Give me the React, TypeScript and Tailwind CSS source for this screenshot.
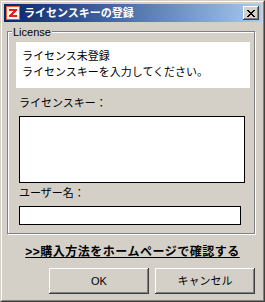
export default function App() {
  return (
    <div className="w-[265px] h-[302px] border border-t-[#d4d0c8] border-l-[#d4d0c8] border-r-[#404040] border-b-[#404040] bg-[#d4d0c8] font-['Liberation_Sans','Noto_Sans_CJK_JP',sans-serif] text-black">
      <div className="h-full border border-t-white border-l-white border-r-[#808080] border-b-[#808080] p-[2px]">
        {/* Title bar */}
        <div className="h-[18px] flex items-center bg-linear-to-r from-[#0a246a] to-[#a6caf0] pl-[1px] pr-[2px]">
          <svg width="16" height="16" viewBox="0 0 16 16" shapeRendering="crispEdges">
            <rect x="1" y="1" width="14" height="14" fill="#e8602a" />
            <rect x="2" y="2" width="12" height="12" fill="#fff4ea" />
            <path d="M4 4h8v2l-5 4h5v2H4v-2l5-4H4z" fill="#e0201c" />
          </svg>
          <span className="ml-[3px] text-[11px] leading-[14px] font-bold text-white">ライセンスキーの登録</span>
          <div className="ml-auto w-[16px] h-[14px] bg-[#d4d0c8] flex items-center justify-center shadow-[inset_-1px_-1px_0_#404040,inset_1px_1px_0_#fff,inset_-2px_-2px_0_#808080]">
            <svg width="8" height="7" viewBox="0 0 8 7" shapeRendering="crispEdges">
              <path
                d="M0 0h2v1H0zM6 0h2v1H6zM1 1h2v1H1zM5 1h2v1H5zM2 2h4v1H2zM3 3h2v1H3zM2 4h4v1H2zM1 5h2v1H1zM5 5h2v1H5zM0 6h2v1H0zM6 6h2v1H6z"
                fill="#000"
              />
            </svg>
          </div>
        </div>

        {/* License group */}
        <div className="mt-[9px] ml-[3px] w-[248px] h-[203px] border border-[#808080] shadow-[inset_1px_1px_0_#fff,1px_1px_0_#fff]">
          <div className="-mt-[6px] ml-[4px] px-[1px] w-fit bg-[#d4d0c8] text-[11px] leading-[13px]">License</div>
          <div className="mt-[3px] ml-[8px] w-[234px] h-[46px] bg-white pl-[6px] pt-[6px] text-[11px] leading-[16px]">
            <p>ライセンス未登録</p>
            <p>ライセンスキーを入力してください。</p>
          </div>
          <div className="mt-[8px] ml-[11px] text-[11px] leading-[14px]">ライセンスキー：</div>
          <textarea
            readOnly
            className="block mt-[6px] ml-[11px] w-[226px] h-[67px] bg-white border border-black resize-none outline-none"
          />
          <div className="mt-[3px] ml-[11px] text-[11px] leading-[14px]">ユーザー名：</div>
          <input
            readOnly
            className="block mt-[6px] ml-[11px] w-[222px] h-[19px] bg-white border border-black outline-none"
          />
        </div>

        {/* Link */}
        <div className="mt-[11px] text-center text-[12px] leading-[14px] font-bold underline tracking-[0.5px]">
          &gt;&gt;購入方法をホームページで確認する
        </div>

        {/* Buttons */}
        <div className="mt-[9px] flex justify-end gap-[6px] pr-[6px]">
          <button className="w-[100px] h-[26px] bg-[#d4d0c8] text-[11px] shadow-[inset_-1px_-1px_0_#404040,inset_1px_1px_0_#fff,inset_-2px_-2px_0_#808080]">
            OK
          </button>
          <button className="w-[100px] h-[26px] bg-[#d4d0c8] text-[11px] shadow-[inset_-1px_-1px_0_#404040,inset_1px_1px_0_#fff,inset_-2px_-2px_0_#808080]">
            キャンセル
          </button>
        </div>
      </div>
    </div>
  );
}
